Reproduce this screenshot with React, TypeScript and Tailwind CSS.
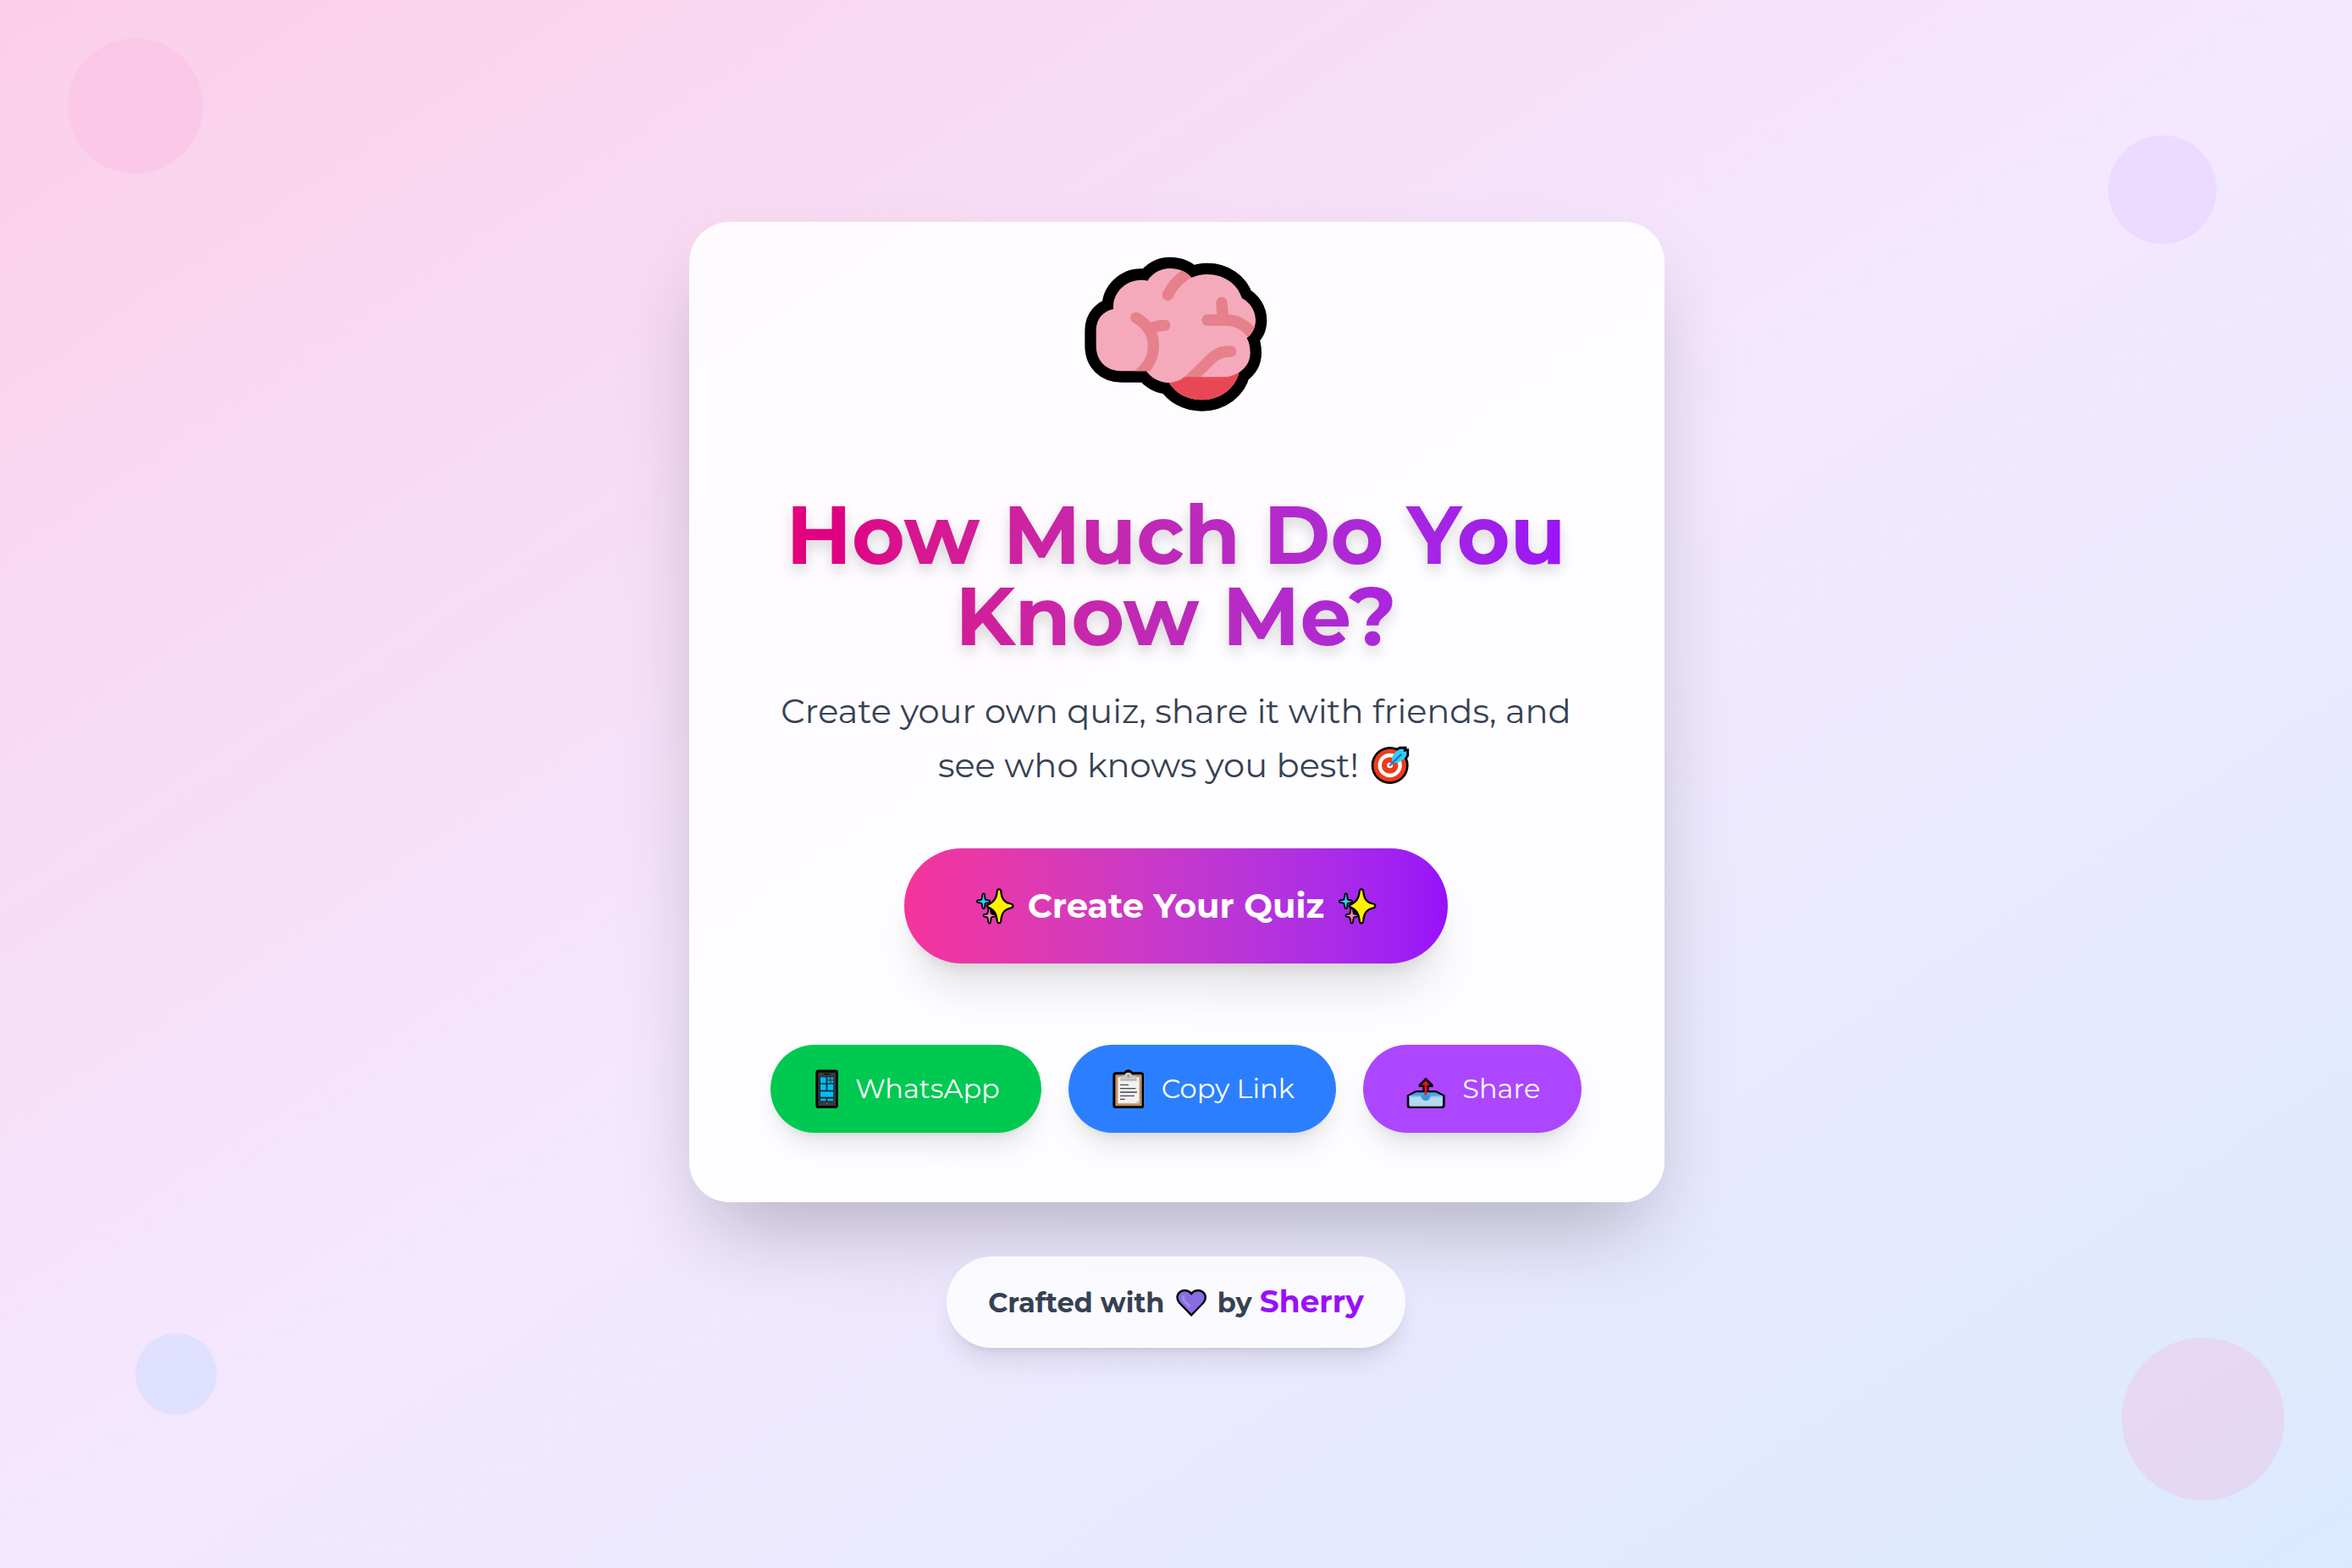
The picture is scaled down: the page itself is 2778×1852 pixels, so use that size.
function Brain() {
  const outline =
    "M165 255C130 262 104 290 104 330V385C104 440 140 475 195 475H282C300 500 330 516 362 516C385 552 425 577 478 577C545 577 598 535 610 480C637 462 650 438 650 410C650 390 646 372 638 358C658 342 669 320 669 295C669 262 650 232 621 217C605 165 555 132 498 132C478 132 460 136 442 144C425 122 395 111 366 111C333 111 304 127 286 155C278 153 272 152 264 152C208 152 165 197 165 245Z";
  return (
    <svg viewBox="0 0 780 690" className="ml-[2px] h-[230px] w-[260px] shrink-0">
      <defs>
        <clipPath id="brain-shape">
          <path d={outline} />
        </clipPath>
      </defs>
      <path d={outline} fill="#000" stroke="#000" strokeWidth="80" strokeLinejoin="round" />
      <path d={outline} fill="#f4aaba" />
      <g clipPath="url(#brain-shape)">
        <g fill="none" stroke="#e6808a" strokeWidth="40" strokeLinecap="round">
          <path d="M358 205Q382 153 442 120" />
          <path d="M245 286C290 312 307 345 307 385C307 428 290 462 245 494" />
          <path d="M347 313Q318 313 298 325" />
          <path d="M498 294H565C605 294 640 318 665 350" />
          <path d="M549 232L553 285" />
          <path d="M581 405C545 405 530 414 510 433L435 506" />
        </g>
        <path d="M355 516Q395 516 415 496H560Q590 494 615 476V590H355Z" fill="#e84855" />
        <path d="M282 475C300 500 330 516 362 516Q395 512 415 496L390 480Z" fill="#f4aaba" />
      </g>
    </svg>
  );
}

function Target() {
  const feather = "M77 64C71 40 84 22 104 14H118L116 24L127 22V36C118 54 102 64 77 64Z";
  return (
    <svg viewBox="0 0 140 140" className="mx-[4px] inline-block h-[46.67px] w-[46.67px] align-[-9px]">
      <path d={feather} fill="#000" stroke="#000" strokeWidth="17" />
      <circle cx="68" cy="72" r="66" fill="#000" />
      <circle cx="68" cy="72" r="58" fill="#ec3c1a" />
      <circle cx="68" cy="72" r="36" fill="none" stroke="#fff" strokeWidth="13" />
      <circle cx="68" cy="72" r="10" fill="#fff" />
      <path d={feather} fill="#35cdf5" />
      <path d="M68 72L107 34" stroke="#0f7bd4" strokeWidth="7" strokeLinecap="round" />
    </svg>
  );
}

function Sparkles() {
  const big = "M120 50Q124 50 124 58C126 82 138 97 158 101Q166 102 166 106Q166 110 158 111C138 115 126 130 124 154Q124 164 120 164Q116 164 116 154C114 130 102 115 80 106C102 97 114 82 116 58Q116 50 120 50Z";
  const blue = "M65 66Q67 82 68 86Q72 89 84 90Q72 92 68 95Q67 99 65 112Q63 99 61 95Q57 92 45 90Q57 89 61 86Q63 82 65 66Z";
  const pink = "M86 118Q88 132 89 136Q93 139 104 140Q93 142 89 145Q88 149 86 164Q84 149 82 145Q78 142 68 140Q78 139 82 136Q84 132 86 118Z";
  return (
    <svg viewBox="36 40 138 133" className="mx-[4.3px] inline-block h-[44.3px] w-[46px] align-[-8.500px]">
      <g fill="#000" stroke="#000" strokeWidth="13" strokeLinejoin="round">
        <path d={blue} />
        <path d={pink} />
        <path d={big} />
        <path d="M84 112L108 136L104 108Z" />
      </g>
      <path d={blue} fill="#35cdf5" stroke="#35cdf5" strokeWidth="2" />
      <path d={pink} fill="#f08cb8" stroke="#f08cb8" strokeWidth="2" />
      <path d={big} fill="#fff100" />
    </svg>
  );
}

function Phone() {
  return (
    <svg viewBox="218 158 82 140" className="mx-[4.5px] h-[46.67px] w-[27.33px] shrink-0">
      <rect x="219" y="159.500" width="80" height="137" rx="10" fill="#000" />
      <rect x="228" y="169" width="63" height="118" rx="2" fill="#3a3a3c" />
      <path d="M248 175H270" stroke="#000" strokeWidth="3" />
      <rect x="233" y="184" width="51" height="88" fill="#1d2429" />
      <g fill="#00bcf2">
        <rect x="236" y="186" width="20" height="21" />
        <rect x="261" y="186" width="9" height="9" />
        <rect x="273" y="186" width="9" height="9" />
        <rect x="261" y="198" width="9" height="9" />
        <rect x="273" y="198" width="9" height="9" />
        <rect x="236" y="211" width="20" height="21" />
        <rect x="261" y="211" width="21" height="21" />
        <rect x="236" y="237" width="46" height="19" />
        <rect x="236" y="262" width="20" height="8" />
        <rect x="261" y="262" width="21" height="8" />
      </g>
      <circle cx="259" cy="280" r="2" fill="#aaa" />
    </svg>
  );
}

function Clipboard() {
  return (
    <svg viewBox="0 0 113 140" className="mr-[4.3px] ml-[3.7px] h-[46.67px] w-[37.67px] shrink-0">
      <rect x="1" y="10" width="111" height="129" rx="11" fill="#000" />
      <circle cx="56" cy="18" r="17" fill="#000" />
      <rect x="10" y="19" width="94" height="111" rx="2" fill="#bd9064" />
      <path d="M19 28H95V112L86 121H19Z" fill="#f2f0f2" />
      <path d="M95 112V121H86V112Z" fill="#cfcaca" />
      <path d="M28 40V28Q28 23 34 23H42Q44 11 56 11Q68 11 70 23H80Q86 23 86 28V40Z" fill="#c9c9cb" />
      <path d="M28 38.500H86" stroke="#9b9b9d" strokeWidth="3" />
      <circle cx="56" cy="24" r="4.500" fill="#bd8a5a" />
      <path d="M27 55H57M27 68H82M27 81H87M27 94H78M27 106H44" stroke="#4a484a" strokeWidth="4" />
    </svg>
  );
}

function Outbox() {
  return (
    <svg viewBox="844 158 138 140" className="mr-1 ml-[3.3px] h-[46.67px] w-[46px] shrink-0">
      <path d="M846 250L877 233H902V221H888V212L913 187L939 212V221H924V233H950L981 250V286Q981 297 970 297H857Q846 297 846 286Z" fill="#000" />
      <path d="M854 252L879 240H948L973 252Z" fill="#4aa3e0" />
      <path d="M854 252H973V284Q973 289 968 289H859Q854 289 854 284Z" fill="#b3daf2" />
      <path d="M854 251H973V256H854Z" fill="#7fc0ec" />
      <path d="M896 250A17 20 0 0 0 930 250Z" fill="#3a96dd" />
      <path d="M913 198L928 214H917V249H909V214H898Z" fill="#e81224" />
    </svg>
  );
}

function Heart() {
  return (
    <svg viewBox="0 0 36.300 32.600" className="mx-[4px] inline-block h-[32.6px] w-[36.3px] align-[-6px]">
      <path
        d="M18.150 30.300L4 15.800C.2 11.500 1 5.500 4.700 2.900C9 0 15 .8 18.150 5C21.300 .8 27.300 0 31.600 2.900C35.300 5.500 36.100 11.500 32.300 15.800Z"
        fill="#886ce4"
        stroke="#000"
        strokeWidth="2.400"
      />
      <path d="M8.500 8.500Q8.500 13 11 15L15.500 19.500" fill="none" stroke="#a08be9" strokeWidth="3" strokeLinecap="round" />
    </svg>
  );
}

const pill =
  "flex h-[104px] items-center gap-4 rounded-full pl-12 text-[32px] text-white shadow-[0_20px_30px_-6px_rgba(0,0,0,0.1),0_8px_12px_-8px_rgba(0,0,0,0.1)]";

export default function App() {
  return (
    <div className="relative flex h-[1852px] w-full flex-col items-center overflow-hidden bg-linear-to-br from-pink-200 via-purple-100 to-blue-100 pt-[262px] font-['Montserrat','Inter',sans-serif]">
      <div className="absolute top-[45px] left-20 size-40 rounded-full bg-pink-300/20" />
      <div className="absolute top-40 right-40 size-32 rounded-full bg-purple-300/25" />
      <div className="absolute top-[1575px] left-40 size-24 rounded-full bg-blue-300/20" />
      <div className="absolute right-20 bottom-20 size-48 rounded-full bg-pink-300/25" />

      <main className="relative ml-[2px] flex h-[1158px] w-[1152px] shrink-0 flex-col items-center rounded-[48px] bg-white/90 pt-[18px] pr-[97px] pl-[95px] text-center shadow-[0_50px_100px_-24px_rgba(0,0,0,0.25)]">
        <Brain />
        <h1 className="mt-[74px] w-full bg-linear-to-r from-pink-600 to-purple-600 bg-clip-text text-[96px] leading-[96px] font-bold text-transparent drop-shadow-[0_8px_8px_rgba(0,0,0,0.15)]">
          How Much Do You Know Me?
        </h1>
        <p className="mt-8 text-[40px] leading-[64px] text-gray-700">
          Create your own quiz, share it with friends, and see who knows you best! <Target />
        </p>
        <button className="mt-[66px] h-[136px] shrink-0 rounded-full bg-linear-to-r from-[#f6339a] to-[#9810fa] px-20 text-[40px] leading-[56px] font-bold whitespace-nowrap text-white shadow-[0_40px_50px_-10px_rgba(0,0,0,0.1),0_16px_20px_-12px_rgba(0,0,0,0.1)]">
          <Sparkles /> Create Your Quiz <Sparkles />
        </button>
        <div className="mt-24 flex gap-8 whitespace-nowrap">
          <button className={`${pill} w-[320px] bg-green-500`}>
            <Phone />
            <span>WhatsApp</span>
          </button>
          <button className={`${pill} w-[316px] bg-blue-500`}>
            <Clipboard />
            <span>Copy Link</span>
          </button>
          <button className={`${pill} w-[258px] bg-purple-500`}>
            <Outbox />
            <span>Share</span>
          </button>
        </div>
      </main>

      <footer className="relative mt-16 flex h-[108px] w-[542px] shrink-0 items-center justify-center rounded-full bg-white/80 whitespace-nowrap shadow-[0_20px_30px_-6px_rgba(0,0,0,0.1),0_8px_12px_-8px_rgba(0,0,0,0.1)]">
        <p className="text-[32px] leading-[44px] font-bold text-gray-700">
          Crafted with <Heart /> by <span className="text-[36px] text-purple-600">Sherry</span>
        </p>
      </footer>
    </div>
  );
}
